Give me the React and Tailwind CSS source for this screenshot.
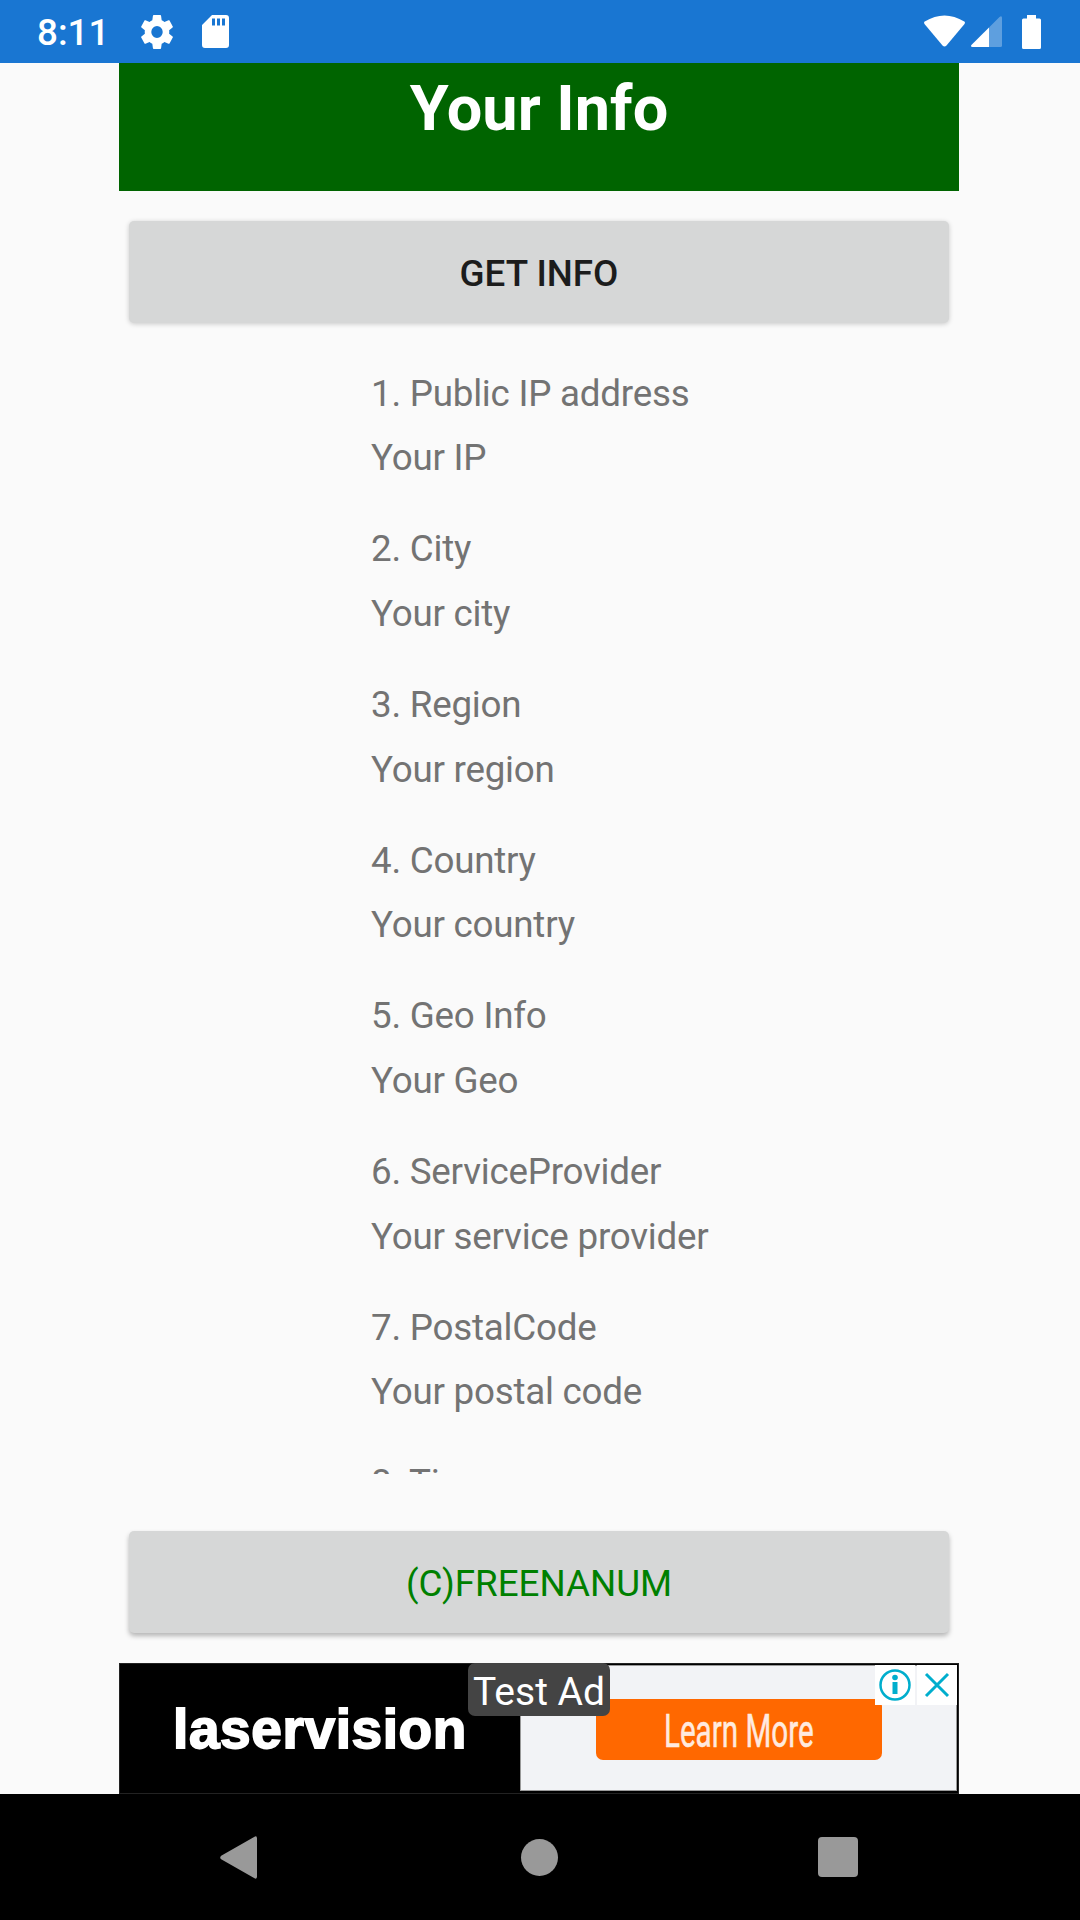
const entries = [
  ["1. Public IP address", "Your IP"],
  ["2. City", "Your city"],
  ["3. Region", "Your region"],
  ["4. Country", "Your country"],
  ["5. Geo Info", "Your Geo"],
  ["6. ServiceProvider", "Your service provider"],
  ["7. PostalCode", "Your postal code"],
  ["8. Time"],
];

function StatusBar() {
  return (
    <header className="flex h-[63px] shrink-0 items-center bg-[#1976d2] text-white">
      <span className="ml-[37px] w-[104px] pt-[4px] text-[36.75px] leading-none font-medium">8:11</span>
      <svg className="h-[34px] w-8 shrink-0" viewBox="2.2 2 19.6 20" preserveAspectRatio="none" fill="currentColor">
        <path d="M19.43 12.98c.04-.32.07-.64.07-.98s-.03-.66-.07-.98l2.11-1.65c.19-.15.24-.42.12-.64l-2-3.46c-.12-.22-.39-.3-.61-.22l-2.49 1c-.52-.4-1.08-.73-1.69-.98l-.38-2.65A.49.49 0 0 0 14 2h-4c-.25 0-.46.18-.49.42l-.38 2.65c-.61.25-1.17.59-1.69.98l-2.49-1c-.23-.09-.49 0-.61.22l-2 3.46c-.13.22-.07.49.12.64l2.11 1.65c-.04.32-.07.65-.07.98s.03.66.07.98l-2.11 1.65c-.19.15-.24.42-.12.64l2 3.46c.12.22.39.3.61.22l2.49-1c.52.4 1.08.73 1.69.98l.38 2.65c.03.24.24.42.49.42h4c.25 0 .46-.18.49-.42l.38-2.65c.61-.25 1.17-.59 1.69-.98l2.49 1c.23.09.49 0 .61-.22l2-3.46c.12-.22.07-.49-.12-.64zM12 15.5a3.500 3.500 0 1 1 0-7 3.500 3.500 0 0 1 0 7z" />
      </svg>
      <svg className="ml-[29px] h-[33px] w-[27px] shrink-0" viewBox="0 0 27 33" fill="currentColor" fillRule="evenodd">
        <path d="M10 0H24a3 3 0 0 1 3 3V30a3 3 0 0 1-3 3H3a3 3 0 0 1-3-3V10ZM10 3.500V10.500H13V3.500ZM15 3.500V10.500H18V3.500ZM20 3.500V10.500H23V3.500Z" />
      </svg>
      <svg className="ml-auto h-[33px] w-[41px] shrink-0" viewBox="0 0 41 33" fill="currentColor">
        <path d="M.7 6.500Q20.500-5.500 40.300 6.500Q41.500 7.500 40.500 9L22.500 30.500Q20.500 32.500 18.500 30.500L.5 9Q-.5 7.500 .7 6.500Z" />
      </svg>
      <svg className="ml-[6px] h-[31px] w-[31px] shrink-0" viewBox="0 0 31 31" fill="currentColor">
        <path d="M18 11.500 28.500 1Q31-.8 31 2V29.500Q31 31 29.500 31H18Z" opacity=".3" />
        <path d="M18 11.500V31H1.500Q-.8 31 .4 28.900Z" />
      </svg>
      <svg className="mr-[39px] ml-[20px] h-[34px] w-[19px] shrink-0" viewBox="0 0 19 34" fill="currentColor">
        <path d="M5 0H14V3.500H17.500Q19 3.500 19 5V32.500Q19 34 17.500 34H1.500Q0 34 0 32.500V5Q0 3.500 1.500 3.500H5Z" />
      </svg>
    </header>
  );
}

function RaisedButton({ className, children }) {
  return (
    <button
      className={
        "mx-[10px] flex h-[102px] shrink-0 items-center justify-center rounded-[5px] bg-[#d6d7d7] pt-[5px] text-[36.75px] leading-none " +
        className
      }
    >
      {children}
    </button>
  );
}

function AdBanner() {
  return (
    <section className="relative mt-[30px] flex h-[131px] shrink-0 border border-[#222] bg-black">
      <div className="flex w-[400px] items-center pl-[53px] font-['Liberation_Sans',Arial,sans-serif] text-[55px] leading-none font-bold text-white">
        <span className="pt-[1px] tracking-[0.6px] [-webkit-text-stroke:1.8px_white]">laservision</span>
      </div>
      <div className="mt-[1px] mr-[1px] mb-[2px] flex flex-1 items-center justify-center border border-[#999] bg-[#f2f3f6]">
        <div className="mt-[3px] mr-[-1px] flex h-[61px] w-[286px] items-center justify-center rounded-[7px] bg-[#ff6800]">
          <span className="scale-x-[0.63] pt-[2px] text-[47px] leading-none whitespace-nowrap text-[#ffeadf] [-webkit-text-stroke:0.6px_#ffeadf]">
            Learn More
          </span>
        </div>
      </div>
      <div className="absolute top-[-1px] left-[348px] flex h-[53px] w-[142px] items-center justify-center rounded-[7px] bg-[#444] pt-[5px] text-[39px] leading-none whitespace-nowrap text-white">
        Test Ad
      </div>
      <div className="absolute top-[1px] right-[1px] flex gap-[2px]">
        <svg className="h-[40px] w-[40px] bg-white" viewBox="0 0 40 40" fill="none" stroke="#00aecd">
          <circle cx="20" cy="20" r="14.500" strokeWidth="2.500" />
          <circle cx="20" cy="12.500" r="2.800" fill="#00aecd" stroke="none" />
          <path d="M20 17V29" strokeWidth="5" />
        </svg>
        <svg className="h-[40px] w-[40px] bg-white" viewBox="0 0 40 40" fill="none" stroke="#00aecd" strokeWidth="3">
          <path d="M9 9 31 31M31 9 9 31" />
        </svg>
      </div>
    </section>
  );
}

function NavigationBar() {
  return (
    <nav className="flex h-[126px] shrink-0 items-center bg-black text-[#999]">
      <svg className="ml-[220px] h-[43px] w-[37px]" viewBox="0 0 38 44" preserveAspectRatio="none" fill="currentColor">
        <path d="M1.200 20.200 35 1Q38-.8 38 2.500V41.500Q38 44.800 35 43L1.200 23.800Q-.8 22 1.200 20.200Z" />
      </svg>
      <span className="ml-[264px] size-[37px] rounded-full bg-[#999]" />
      <span className="ml-[260px] size-[40px] rounded-[4px] bg-[#999]" />
    </nav>
  );
}

export default function App() {
  return (
    <div className="flex h-[1920px] w-[1080px] flex-col overflow-hidden bg-[#fafafa] font-[Roboto,sans-serif]">
      <StatusBar />
      <main className="ml-[119px] flex w-[840px] flex-1 flex-col">
        <h1 className="flex h-[128px] shrink-0 items-start justify-center bg-[#006400] pt-[14px] text-[63px] leading-[64px] font-bold text-white">
          Your Info
        </h1>
        <RaisedButton className="mt-[30px] font-medium text-[#1c1c1c] shadow-[0_1px_5px_rgba(0,0,0,0.2)]">GET INFO</RaisedButton>
        <div className="mt-[38px] h-[1113px] shrink-0 overflow-hidden pt-[0.6px] pl-[252px] text-[36.75px] tracking-[-0.23px] text-[#737373]">
          {entries.map(([label, value]) => (
            <div key={label} className="h-[155.67px]">
              <p className="h-[64.7px] leading-[64px] whitespace-nowrap">{label}</p>
              {value && <p className="leading-[64px] whitespace-nowrap">{value}</p>}
            </div>
          ))}
        </div>
        <RaisedButton className="mt-[57px] text-[#008000] shadow-[0_3px_5px_rgba(0,0,0,0.28)]">(C)FREENANUM</RaisedButton>
        <AdBanner />
      </main>
      <NavigationBar />
    </div>
  );
}
